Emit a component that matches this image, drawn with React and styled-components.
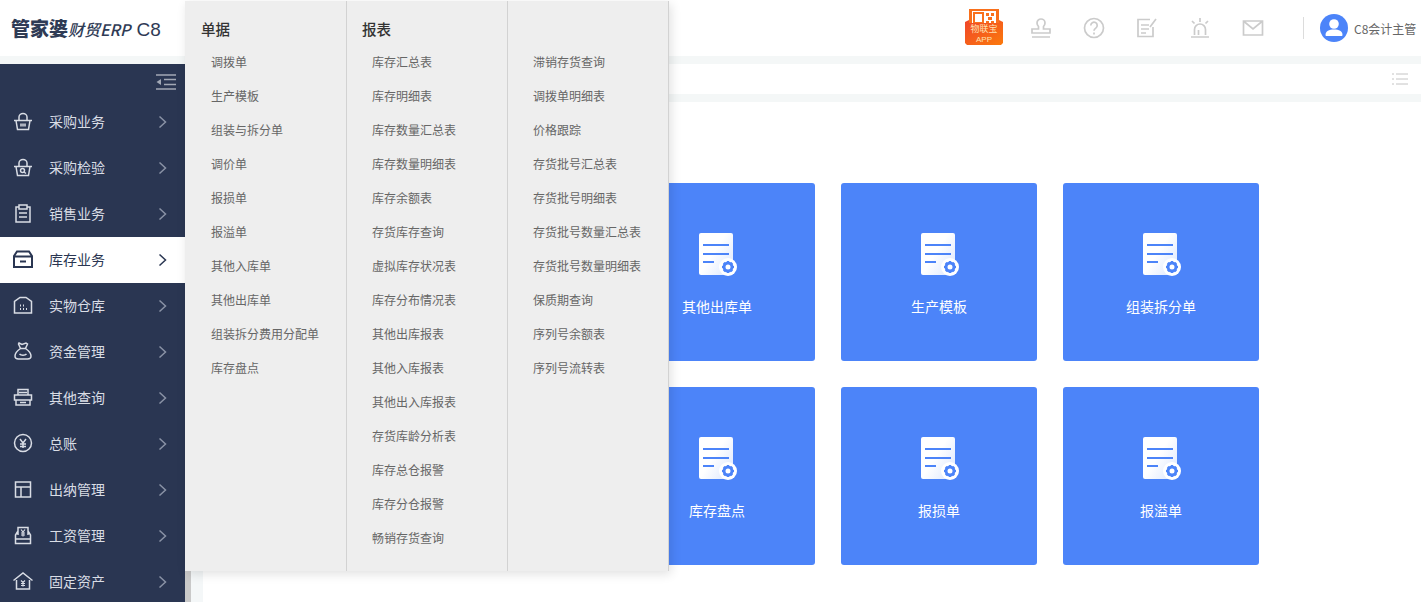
import React from "react";
import styled, { createGlobalStyle } from "styled-components";

const GlobalStyle = createGlobalStyle`
  html, body {
    margin: 0;
    padding: 0;
    height: 100%;
    overflow: hidden;
    background: #fff;
    font-family: "Noto Sans CJK SC", "Noto Sans", sans-serif;
  }
`;

const Page = styled.div`
  position: relative;
  width: 1421px;
  height: 602px;
  overflow: hidden;
  display: flex;
  flex-direction: column;
`;

const Header = styled.header`
  height: 56px;
  flex: none;
  display: flex;
  align-items: center;
  background: #fff;
`;

const Logo = styled.div`
  width: 185px;
  flex: none;
  box-sizing: border-box;
  padding: 0 0 2px 11px;
  display: flex;
  align-items: baseline;
  color: #2f3b55;
  white-space: nowrap;
`;

const LogoMain = styled.span`
  font-size: 19px;
  font-weight: 900;
`;

const LogoSub = styled.span`
  font-size: 16px;
  font-style: italic;
  font-weight: 500;
`;

const LogoCode = styled.span`
  font-family: "Liberation Sans", sans-serif;
  font-size: 19px;
  margin-left: 6px;
`;

const HeaderTools = styled.div`
  margin-left: auto;
  display: flex;
  align-items: center;
  height: 100%;
`;

const AppBadge = styled.svg`
  display: block;
  margin: -2px 26px 0 0;
`;

const ToolIcon = styled.svg`
  display: block;
  width: 24px;
  height: 24px;
  margin-right: 29px;
  color: #cbcbcb;
`;

const Divider = styled.div`
  width: 1px;
  height: 22px;
  background: #dcdcdc;
  margin: 0 16px 0 9px;
`;

const User = styled.div`
  display: flex;
  align-items: center;
  gap: 6px;
  width: 101px;
  font-size: 12px;
  color: #666;
  white-space: nowrap;
`;

const Strip = styled.div`
  height: 8px;
  flex: none;
  background: #f4f7f7;
`;

const Body = styled.div`
  flex: 1;
  min-height: 0;
  display: flex;
`;

const Sidebar = styled.nav`
  width: 185px;
  flex: none;
  background: #2a3652;
  overflow: hidden;
`;

const Collapse = styled.div`
  height: 35px;
  display: flex;
  justify-content: flex-end;
  align-items: center;
  padding-right: 9px;
  color: #a2a8b5;
`;

const NavItem = styled.div`
  height: 46px;
  flex: none;
  display: flex;
  align-items: center;
  padding: 0 18px 0 13px;
  font-size: 14px;
  color: ${(p) => (p.$active ? "#2a3652" : "#d9dde5")};
  background: ${(p) => (p.$active ? "#fff" : "transparent")};
`;

const NavIcon = styled.svg`
  width: 20px;
  height: 20px;
  flex: none;
  margin: 0 16px 2px 0;
`;

const NavLabel = styled.span`
  flex: 1;
  padding-bottom: 2px;
`;

const NavArrow = styled.svg`
  display: block;
  margin-bottom: 1px;
  color: ${(p) => (p.$active ? "#2a3652" : "#8a93a6")};
`;

const Main = styled.main`
  flex: 1;
  min-width: 0;
  display: flex;
  flex-direction: column;
`;

const TabBar = styled.div`
  height: 30px;
  flex: none;
  display: flex;
  align-items: center;
  justify-content: flex-end;
  padding-right: 13px;
  color: #c4c4c4;
`;

const Workspace = styled.div`
  flex: 1;
  min-height: 0;
  display: flex;
`;

const ScrollEdge = styled.div`
  width: 6px;
  flex: none;
  background: #c9c9c9;
`;

const Gutter = styled.div`
  width: 12px;
  flex: none;
  background: #f4f7f8;
`;

const Content = styled.div`
  flex: 1;
  padding: 81px 0 0 416px;
`;

const CardGrid = styled.div`
  display: grid;
  grid-template-columns: repeat(3, 196px);
  grid-auto-rows: 178px;
  gap: 26px;
`;

const Card = styled.div`
  background: #4c84f9;
  border-radius: 3px;
  color: #fff;
  font-size: 14px;
  line-height: 20px;
  display: flex;
  flex-direction: column;
  align-items: center;
  padding-top: 50px;
  box-sizing: border-box;
`;

const CardIcon = styled.svg`
  display: block;
  margin: 0 0 19px 4px;
`;

const Flyout = styled.div`
  position: absolute;
  left: 185px;
  top: 1px;
  width: 484px;
  height: 570px;
  display: grid;
  grid-template-columns: 162px 161px 161px;
  background: #eee;
  box-shadow: 2px 3px 10px rgba(0, 0, 0, 0.12);
`;

const FlyoutColumn = styled.div`
  box-sizing: border-box;
  border-right: 1px solid #d2d2d2;
  padding-left: ${(p) => p.$indent}px;
`;

const FlyoutTitle = styled.div`
  height: 44px;
  margin-left: -10px;
  padding-top: 17px;
  box-sizing: border-box;
  font-size: 14.5px;
  line-height: 22px;
  font-weight: 500;
  color: #333;
`;

const FlyoutLink = styled.div`
  height: 34px;
  font-size: 12px;
  line-height: 34px;
  color: #666;
  white-space: nowrap;
`;

const navItems = [
  ["采购业务", "basket"],
  ["采购检验", "basketSearch"],
  ["销售业务", "clipboard"],
  ["库存业务", "box"],
  ["实物仓库", "warehouse"],
  ["资金管理", "moneyBag"],
  ["其他查询", "printer"],
  ["总账", "yen"],
  ["出纳管理", "layout"],
  ["工资管理", "payroll"],
  ["固定资产", "house"],
];

const bills = ["调拨单", "生产模板", "组装与拆分单", "调价单", "报损单", "报溢单", "其他入库单", "其他出库单", "组装拆分费用分配单", "库存盘点"];

const reports = ["库存汇总表", "库存明细表", "库存数量汇总表", "库存数量明细表", "库存余额表", "存货库存查询", "虚拟库存状况表", "库存分布情况表", "其他出库报表", "其他入库报表", "其他出入库报表", "存货库龄分析表", "库存总仓报警", "库存分仓报警", "畅销存货查询"];

const moreReports = ["滞销存货查询", "调拨单明细表", "价格跟踪", "存货批号汇总表", "存货批号明细表", "存货批号数量汇总表", "存货批号数量明细表", "保质期查询", "序列号余额表", "序列号流转表"];

const cards = ["其他出库单", "生产模板", "组装拆分单", "库存盘点", "报损单", "报溢单"];

function SideGlyph({ name }) {
  switch (name) {
    case "basket":
      return (
        <>
          <path d="M1 9.500h18M3 9.500l1.500 9h11l1.500-9M6 9.500V6a4 3.500 0 0 1 8 0v3.500" />
          <path d="M8 12.500v3M10 12.500v3M12 12.500v3" />
        </>
      );
    case "basketSearch":
      return (
        <>
          <path d="M1 9.500h18M3 9.500l1.500 9h11l1.500-9M6 9.500V6a4 3.500 0 0 1 8 0v3.500" />
          <circle cx="9.500" cy="13.500" r="2" />
          <path d="M11 15l2 1.500" />
        </>
      );
    case "clipboard":
      return (
        <>
          <path d="M6 4H3v15h14V4h-3" />
          <rect x="6" y="2" width="8" height="4" />
          <path d="M6 10h8M6 14h8" />
        </>
      );
    case "box":
      return (
        <>
          <path d="M4 2.500h12L19 7v11H1V7zM1 7.500h18" strokeWidth="2" />
          <path d="M7 12.500h6" strokeWidth="2" />
        </>
      );
    case "warehouse":
      return (
        <>
          <path d="M1.500 18V6.500L7 2.500h6l5.500 4V18z" />
          <path d="M7 10.500h1M10 10.500h1M7 14h1M10 14h1M13 14h1" strokeWidth="2" />
        </>
      );
    case "moneyBag":
      return (
        <>
          <path d="M6 2l3 1.500L13 2l1.500 1-2 4.500c3 2 5.500 5 5.500 7.500 0 2-1.500 3-3.500 3h-9C3.500 18 2 17 2 15c0-2.500 2.500-5.500 5.500-7.500l-2-4.500z" />
          <path d="M6.500 13c1.500 1.500 5.500 1.500 7 0M7.500 7.500h5" />
        </>
      );
    case "printer":
      return (
        <>
          <path d="M5 8V2.500h10V8M1.500 8h17v5h-17zM3 13v5h14v-5" />
          <path d="M6 5.500h8M7 15.500h6" />
        </>
      );
    case "yen":
      return (
        <>
          <circle cx="10" cy="10" r="8.500" />
          <path d="M7 6l3 4 3-4M10 10v5M7 11h6M7 13.500h6" />
        </>
      );
    case "layout":
      return <path d="M2.500 3h15v15h-15zM2.500 8h15M8 8v10" />;
    case "payroll":
      return (
        <>
          <path d="M5 10V2.500h10V10M5 6l-2.500 4v8.500h15V10L15 6M2.500 14h15" />
          <path d="M8 4.500l2 2.500 2-2.500M10 7v4.500M8 8h4M8 10h4" strokeWidth="1.200" />
        </>
      );
    case "house":
    default:
      return (
        <>
          <path d="M0.500 9.500L10 2l9.500 7.500M3.500 9v9h13V9" />
          <path d="M8 9.500l2 2 2-2M10 11.500v4M8 12.500h4M8 14.500h4" strokeWidth="1.200" />
        </>
      );
  }
}

function DocIcon() {
  return (
    <CardIcon width="40" height="44" viewBox="0 0 40 44">
      <defs>
        <linearGradient id="docFade" x1="0.4" y1="0.5" x2="0.9" y2="0.9">
          <stop offset="0" stopColor="#fff" />
          <stop offset="1" stopColor="#dfe9fe" />
        </linearGradient>
      </defs>
      <rect x="0" y="0" width="34" height="42" rx="2" fill="url(#docFade)" />
      <path d="M4 12h26M4 21h26M4 29h11" stroke="#4c84f9" strokeWidth="2" />
      <circle cx="29" cy="34" r="9" fill="#fff" />
      <circle cx="29" cy="34" r="4" fill="none" stroke="#4c84f9" strokeWidth="3" />
      <path
        d="M29 28v2M29 38v2M23 34h2M33 34h2M24.800 29.800l1.400 1.400M31.800 36.800l1.400 1.400M24.800 38.200l1.400-1.400M31.800 31.200l1.400-1.400"
        stroke="#4c84f9"
        strokeWidth="2.200"
      />
    </CardIcon>
  );
}

function ToolGlyph({ children }) {
  return (
    <ToolIcon viewBox="0 0 24 24" fill="none" stroke="currentColor" strokeWidth="1.700">
      {children}
    </ToolIcon>
  );
}

export default function App() {
  return (
    <Page>
      <GlobalStyle />
      <Header>
        <Logo>
          <LogoMain>管家婆</LogoMain>
          <LogoSub>财贸ERP</LogoSub>
          <LogoCode>C8</LogoCode>
        </Logo>
        <HeaderTools>
          <AppBadge width="38" height="36" viewBox="0 0 38 36">
            <defs>
              <linearGradient id="badge" x1="0" y1="0" x2="1" y2="1">
                <stop offset="0" stopColor="#f0452a" />
                <stop offset="1" stopColor="#fb7a0c" />
              </linearGradient>
            </defs>
            <rect x="4" y="0" width="30" height="20" fill="#f9701c" />
            <rect x="7" y="2" width="24" height="16" fill="#fff" />
            <rect x="9" y="4" width="9" height="10" fill="none" stroke="#f9701c" strokeWidth="2" />
            <path d="M21 4h3v3h-3zM26 4h3v3h-3zM23 8h4v3h-4zM21 12h3v3h-3zM26 12h3v3h-3z" fill="#f9701c" />
            <path d="M0 13l4-2v3h30v-3l4 2v21l-2 2H2l-2-2z" fill="url(#badge)" />
            <text x="19" y="23" textAnchor="middle" fontSize="9" fill="#ffe2b0" fontFamily="Noto Sans CJK SC, sans-serif">物联宝</text>
            <text x="19" y="33" textAnchor="middle" fontSize="8" fill="#ffe2b0" fontFamily="Liberation Sans, sans-serif">APP</text>
          </AppBadge>
          <ToolGlyph>
            <path d="M9.500 10.500c-1-1-1.500-2-1.500-3.500a4 4 0 0 1 8 0c0 1.500-.5 2.500-1.500 3.500v2.500H21v4H3v-4h6.500zM3 21h18" />
          </ToolGlyph>
          <ToolGlyph>
            <circle cx="12" cy="12" r="9.500" />
            <path d="M8.800 9.500a3.200 3.200 0 1 1 5 2.600c-1.200.8-1.800 1.400-1.800 2.700M12 16.500v2" />
          </ToolGlyph>
          <ToolGlyph>
            <path d="M18 11v9.500H3v-17h12M6 9h8M6 13h8M6 17h5M15 11l6-8" />
          </ToolGlyph>
          <ToolGlyph>
            <path d="M6.500 19v-5.500a5.500 5.500 0 0 1 11 0V19M3 21h18M10.500 19v-5M12 2v4M4 5l2.500 2.500M20 5l-2.500 2.500" />
          </ToolGlyph>
          <ToolGlyph>
            <path d="M2.500 5h19v14h-19zM3 5.500l9 7.500 9-7.500" />
          </ToolGlyph>
          <Divider />
          <User>
            <svg width="28" height="28" viewBox="0 0 28 28">
              <circle cx="14" cy="14" r="14" fill="#4c84f9" />
              <circle cx="14" cy="10" r="4.800" fill="#fff" />
              <path d="M5.500 21c0-4 3.500-5.500 8.500-5.500s8.500 1.500 8.500 5.500c0 .8-.5 1-1 1h-15c-.5 0-1-.2-1-1z" fill="#fff" />
            </svg>
            C8会计主管
          </User>
        </HeaderTools>
      </Header>
      <Strip />
      <Body>
        <Sidebar>
          <Collapse>
            <svg width="20" height="16" viewBox="0 0 20 16" fill="none" stroke="currentColor" strokeWidth="1.500">
              <path d="M0 1h20M8 5.500h12M8 10.500h12M0 15h20" />
              <path d="M5 5v6L0.500 8z" fill="currentColor" stroke="none" />
            </svg>
          </Collapse>
          {navItems.map(([label, icon]) => {
            const active = label === "库存业务";
            return (
              <NavItem key={label} $active={active}>
                <NavIcon viewBox="0 0 20 20" fill="none" stroke="currentColor" strokeWidth="1.500">
                  <SideGlyph name={icon} />
                </NavIcon>
                <NavLabel>{label}</NavLabel>
                <NavArrow $active={active} width="9" height="14" viewBox="0 0 9 14" fill="none" stroke="currentColor" strokeWidth="1.500">
                  <path d="M1.500 1.500L7.500 7l-6 5.500" />
                </NavArrow>
              </NavItem>
            );
          })}
        </Sidebar>
        <Main>
          <TabBar>
            <svg width="16" height="12" viewBox="0 0 16 12" fill="none" stroke="currentColor" strokeWidth="1">
              <path d="M0 1h2M4 1h12M0 6h2M4 6h12M0 11h2M4 11h12" />
            </svg>
          </TabBar>
          <Strip />
          <Workspace>
            <ScrollEdge />
            <Gutter />
            <Content>
              <CardGrid>
                {cards.map((name) => (
                  <Card key={name}>
                    <DocIcon />
                    {name}
                  </Card>
                ))}
              </CardGrid>
            </Content>
          </Workspace>
        </Main>
      </Body>
      <Flyout>
        <FlyoutColumn $indent={26}>
          <FlyoutTitle>单据</FlyoutTitle>
          {bills.map((name) => (
            <FlyoutLink key={name}>{name}</FlyoutLink>
          ))}
        </FlyoutColumn>
        <FlyoutColumn $indent={25}>
          <FlyoutTitle>报表</FlyoutTitle>
          {reports.map((name) => (
            <FlyoutLink key={name}>{name}</FlyoutLink>
          ))}
        </FlyoutColumn>
        <FlyoutColumn $indent={25}>
          <FlyoutTitle />
          {moreReports.map((name) => (
            <FlyoutLink key={name}>{name}</FlyoutLink>
          ))}
        </FlyoutColumn>
      </Flyout>
    </Page>
  );
}
